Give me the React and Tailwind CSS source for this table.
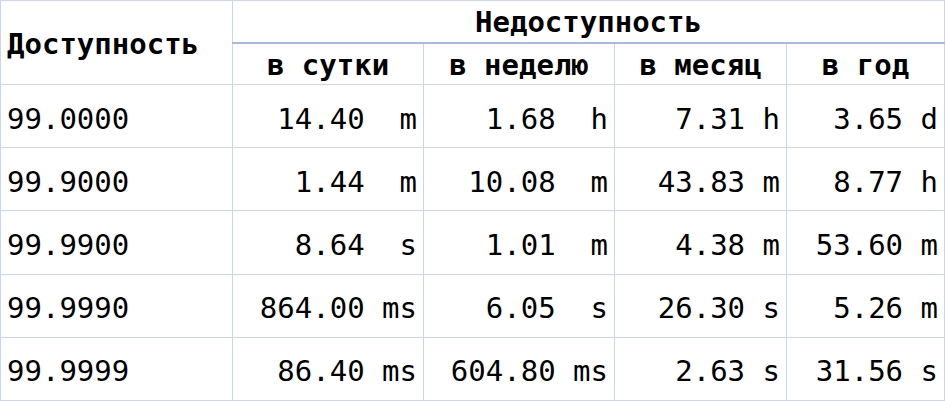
const rows = [
  ["99.0000", "14.40  m", "1.68  h", "7.31 h", "3.65 d"],
  ["99.9000", "1.44  m", "10.08  m", "43.83 m", "8.77 h"],
  ["99.9900", "8.64  s", "1.01  m", "4.38 m", "53.60 m"],
  ["99.9990", "864.00 ms", "6.05  s", "26.30 s", "5.26 m"],
  ["99.9999", "86.40 ms", "604.80 ms", "2.63 s", "31.56 s"],
];

const periods = ["в сутки", "в неделю", "в месяц", "в год"];

export default function App() {
  return (
    <div className="bg-white" style={{ fontFamily: '"DejaVu Sans Mono", monospace' }}>
      <table className="w-[945px] table-fixed border-collapse border border-[#c9d6f0] text-[29px] leading-[34px] text-black">
        <colgroup>
          <col className="w-[232px]" />
          <col className="w-[191px]" />
          <col className="w-[191px]" />
          <col className="w-[172px]" />
          <col />
        </colgroup>
        <thead>
          <tr className="h-[42px]">
            <th rowSpan={2} className="border border-[#c9d6f0] px-1.5 pt-[3px] text-left align-middle font-bold whitespace-pre">
              Доступность
            </th>
            <th colSpan={4} className="border border-[#c9d6f0] border-b-2 border-b-[#a3b9e6] px-1.5 pt-[2px] text-center font-bold">
              Недоступность
            </th>
          </tr>
          <tr className="h-[42px]">
            {periods.map((p) => (
              <th key={p} className="border border-[#c9d6f0] px-1.5 pt-[3px] text-center font-bold whitespace-pre">
                {p}
              </th>
            ))}
          </tr>
        </thead>
        <tbody>
          {rows.map((row) => (
            <tr key={row[0]} className="h-[63.2px]">
              {row.map((cell, i) => (
                <td
                  key={i}
                  className={`border border-[#c9d6f0] px-1.5 pt-[5px] whitespace-pre ${i === 0 ? "text-left" : "text-right"}`}
                >
                  {cell}
                </td>
              ))}
            </tr>
          ))}
        </tbody>
      </table>
    </div>
  );
}
